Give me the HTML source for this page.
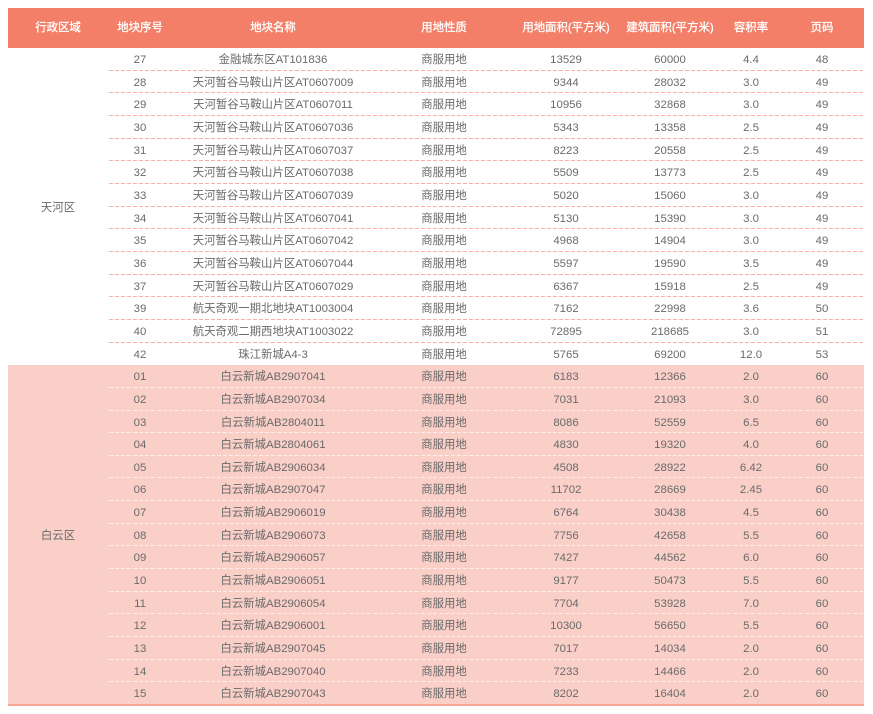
<!DOCTYPE html>
<html lang="zh">
<head>
<meta charset="utf-8">
<style>
html,body{margin:0;padding:0;background:#fff}
body{width:873px;height:714px;overflow:hidden;position:relative;font-family:"Liberation Sans","Noto Sans CJK SC",sans-serif;font-size:11.4px;color:#6a6a6a}
.h{position:absolute;left:8px;top:8px;width:856px;height:40px;background:#f37f68;color:#fff;-webkit-text-stroke:.3px #fff;display:flex;line-height:41px}
.s{position:absolute;left:8px;width:100px;text-align:center;line-height:16px}
.pink{position:absolute;left:8px;top:365px;width:856px;height:339px;background:#f9cfc8;border-bottom:2px solid #f6a595}
.t{position:absolute;left:108px;top:48px;width:756px}
.r{height:22.67px;display:flex;line-height:24px;box-sizing:border-box;background:repeating-linear-gradient(90deg,transparent 0 1px,#f8aea2 1px 5px,transparent 5px 6px) left bottom/100% 1px no-repeat}
.w{background-image:repeating-linear-gradient(90deg,transparent 0 1px,#fdeeea 1px 5px,transparent 5px 6px)}
.n{background:none}
span{display:block;text-align:center;white-space:nowrap;flex:none}
.a{width:100px}.b{width:64px}.c{width:202px}.d{width:140px}.e{width:104px}.f{width:104px}.g{width:58px}.i{width:84px}
</style>
</head>
<body>
<div class="h"><span class="a">行政区域</span><span class="b">地块序号</span><span class="c">地块名称</span><span class="d">用地性质</span><span class="e">用地面积(平方米)</span><span class="f">建筑面积(平方米)</span><span class="g">容积率</span><span class="i">页码</span></div>
<div class="pink"></div>
<div class="s" style="top:200px">天河区</div>
<div class="s" style="top:528px">白云区</div>
<div class="t">
<div class="r"><span class="b">27</span><span class="c">金融城东区AT101836</span><span class="d">商服用地</span><span class="e">13529</span><span class="f">60000</span><span class="g">4.4</span><span class="i">48</span></div>
<div class="r"><span class="b">28</span><span class="c">天河暂谷马鞍山片区AT0607009</span><span class="d">商服用地</span><span class="e">9344</span><span class="f">28032</span><span class="g">3.0</span><span class="i">49</span></div>
<div class="r"><span class="b">29</span><span class="c">天河暂谷马鞍山片区AT0607011</span><span class="d">商服用地</span><span class="e">10956</span><span class="f">32868</span><span class="g">3.0</span><span class="i">49</span></div>
<div class="r"><span class="b">30</span><span class="c">天河暂谷马鞍山片区AT0607036</span><span class="d">商服用地</span><span class="e">5343</span><span class="f">13358</span><span class="g">2.5</span><span class="i">49</span></div>
<div class="r"><span class="b">31</span><span class="c">天河暂谷马鞍山片区AT0607037</span><span class="d">商服用地</span><span class="e">8223</span><span class="f">20558</span><span class="g">2.5</span><span class="i">49</span></div>
<div class="r"><span class="b">32</span><span class="c">天河暂谷马鞍山片区AT0607038</span><span class="d">商服用地</span><span class="e">5509</span><span class="f">13773</span><span class="g">2.5</span><span class="i">49</span></div>
<div class="r"><span class="b">33</span><span class="c">天河暂谷马鞍山片区AT0607039</span><span class="d">商服用地</span><span class="e">5020</span><span class="f">15060</span><span class="g">3.0</span><span class="i">49</span></div>
<div class="r"><span class="b">34</span><span class="c">天河暂谷马鞍山片区AT0607041</span><span class="d">商服用地</span><span class="e">5130</span><span class="f">15390</span><span class="g">3.0</span><span class="i">49</span></div>
<div class="r"><span class="b">35</span><span class="c">天河暂谷马鞍山片区AT0607042</span><span class="d">商服用地</span><span class="e">4968</span><span class="f">14904</span><span class="g">3.0</span><span class="i">49</span></div>
<div class="r"><span class="b">36</span><span class="c">天河暂谷马鞍山片区AT0607044</span><span class="d">商服用地</span><span class="e">5597</span><span class="f">19590</span><span class="g">3.5</span><span class="i">49</span></div>
<div class="r"><span class="b">37</span><span class="c">天河暂谷马鞍山片区AT0607029</span><span class="d">商服用地</span><span class="e">6367</span><span class="f">15918</span><span class="g">2.5</span><span class="i">49</span></div>
<div class="r"><span class="b">39</span><span class="c">航天奇观一期北地块AT1003004</span><span class="d">商服用地</span><span class="e">7162</span><span class="f">22998</span><span class="g">3.6</span><span class="i">50</span></div>
<div class="r"><span class="b">40</span><span class="c">航天奇观二期西地块AT1003022</span><span class="d">商服用地</span><span class="e">72895</span><span class="f">218685</span><span class="g">3.0</span><span class="i">51</span></div>
<div class="r n"><span class="b">42</span><span class="c">珠江新城A4-3</span><span class="d">商服用地</span><span class="e">5765</span><span class="f">69200</span><span class="g">12.0</span><span class="i">53</span></div>
<div class="r w"><span class="b">01</span><span class="c">白云新城AB2907041</span><span class="d">商服用地</span><span class="e">6183</span><span class="f">12366</span><span class="g">2.0</span><span class="i">60</span></div>
<div class="r w"><span class="b">02</span><span class="c">白云新城AB2907034</span><span class="d">商服用地</span><span class="e">7031</span><span class="f">21093</span><span class="g">3.0</span><span class="i">60</span></div>
<div class="r w"><span class="b">03</span><span class="c">白云新城AB2804011</span><span class="d">商服用地</span><span class="e">8086</span><span class="f">52559</span><span class="g">6.5</span><span class="i">60</span></div>
<div class="r w"><span class="b">04</span><span class="c">白云新城AB2804061</span><span class="d">商服用地</span><span class="e">4830</span><span class="f">19320</span><span class="g">4.0</span><span class="i">60</span></div>
<div class="r w"><span class="b">05</span><span class="c">白云新城AB2906034</span><span class="d">商服用地</span><span class="e">4508</span><span class="f">28922</span><span class="g">6.42</span><span class="i">60</span></div>
<div class="r w"><span class="b">06</span><span class="c">白云新城AB2907047</span><span class="d">商服用地</span><span class="e">11702</span><span class="f">28669</span><span class="g">2.45</span><span class="i">60</span></div>
<div class="r w"><span class="b">07</span><span class="c">白云新城AB2906019</span><span class="d">商服用地</span><span class="e">6764</span><span class="f">30438</span><span class="g">4.5</span><span class="i">60</span></div>
<div class="r w"><span class="b">08</span><span class="c">白云新城AB2906073</span><span class="d">商服用地</span><span class="e">7756</span><span class="f">42658</span><span class="g">5.5</span><span class="i">60</span></div>
<div class="r w"><span class="b">09</span><span class="c">白云新城AB2906057</span><span class="d">商服用地</span><span class="e">7427</span><span class="f">44562</span><span class="g">6.0</span><span class="i">60</span></div>
<div class="r w"><span class="b">10</span><span class="c">白云新城AB2906051</span><span class="d">商服用地</span><span class="e">9177</span><span class="f">50473</span><span class="g">5.5</span><span class="i">60</span></div>
<div class="r w"><span class="b">11</span><span class="c">白云新城AB2906054</span><span class="d">商服用地</span><span class="e">7704</span><span class="f">53928</span><span class="g">7.0</span><span class="i">60</span></div>
<div class="r w"><span class="b">12</span><span class="c">白云新城AB2906001</span><span class="d">商服用地</span><span class="e">10300</span><span class="f">56650</span><span class="g">5.5</span><span class="i">60</span></div>
<div class="r w"><span class="b">13</span><span class="c">白云新城AB2907045</span><span class="d">商服用地</span><span class="e">7017</span><span class="f">14034</span><span class="g">2.0</span><span class="i">60</span></div>
<div class="r w"><span class="b">14</span><span class="c">白云新城AB2907040</span><span class="d">商服用地</span><span class="e">7233</span><span class="f">14466</span><span class="g">2.0</span><span class="i">60</span></div>
<div class="r n"><span class="b">15</span><span class="c">白云新城AB2907043</span><span class="d">商服用地</span><span class="e">8202</span><span class="f">16404</span><span class="g">2.0</span><span class="i">60</span></div>
</div>
</body>
</html>
